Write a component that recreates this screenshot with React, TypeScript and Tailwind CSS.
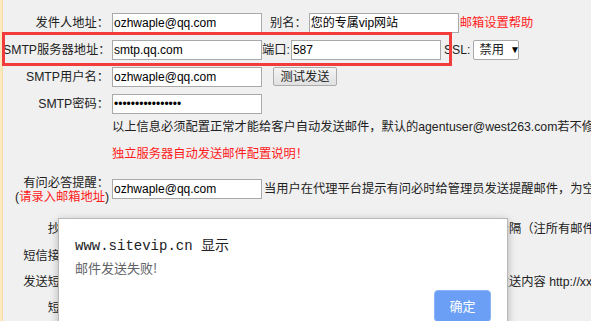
const font = { fontFamily: '"Liberation Sans", "Noto Sans CJK SC", sans-serif' }

function Field({ value, w = 'w-[150px]' }: { value: string; w?: string }) {
  return (
    <div className={`${w} h-[20px] shrink-0 bg-white border border-[#a9a9a9] pl-[1px] flex items-center text-[12px] text-black overflow-hidden`}>
      {value}
    </div>
  )
}

function Label({ children }: { children: React.ReactNode }) {
  return <div className="w-[109px] shrink-0 text-right pr-[3px] text-[#222]">{children}</div>
}

export default function App() {
  return (
    <div className="relative w-[591px] h-[321px] overflow-hidden bg-[#f0f0f0] flex" style={font}>
      {/* left strip */}
      <div className="w-[3px] shrink-0 bg-[#fde9c0] border-r border-[#f5dca8]" />

      <div className="flex-1 flex flex-col pt-[9px] whitespace-nowrap text-[12.25px] leading-[14px] text-[#222]">
        <div className="h-[27px] flex items-center">
          <Label>发件人地址：</Label>
          <Field value="ozhwaple@qq.com" />
          <span className="ml-[8px] mr-[2px]">别名：</span>
          <Field value="您的专属vip网站" />
          <span className="ml-[1px] text-[#ff1a1a]">邮箱设置帮助</span>
        </div>

        <div className="h-[27px] flex items-center">
          <Label>SMTP服务器地址：</Label>
          <Field value="smtp.qq.com" />
          <span className="mr-[1px]">端口:</span>
          <Field value="587" />
          <span className="ml-[3px] mr-[3px]">SSL:</span>
          <div className="h-[20px] w-[46px] bg-white border border-[#a9a9a9] rounded-[2px] flex items-center pl-[5px] gap-[6px]">
            <span>禁用</span>
            <span className="text-[10px] text-black">▼</span>
          </div>
        </div>

        <div className="h-[27px] flex items-center">
          <Label>SMTP用户名：</Label>
          <Field value="ozhwaple@qq.com" />
          <div className="ml-[11px] h-[19px] w-[64px] flex items-center justify-center bg-gradient-to-b from-[#f4f4f4] to-[#e0e0e0] border border-[#acacac] rounded-[2px]">
            测试发送
          </div>
        </div>

        <div className="h-[27px] flex items-center">
          <Label>SMTP密码：</Label>
          <Field value={'•'.repeat(16)} />
        </div>

        <div className="h-[20px] flex items-center">
          <div className="w-[109px] shrink-0" />
          <span>以上信息必须配置正常才能给客户自动发送邮件，默认的agentuser@west263.com若不修改将无法正常发送</span>
        </div>

        <div className="h-[34px] flex items-center">
          <div className="w-[109px] shrink-0" />
          <span className="text-[#ff1a1a]">独立服务器自动发送邮件配置说明！</span>
        </div>

        <div className="h-[43px] flex items-start">
          <div className="w-[109px] shrink-0 text-right pr-[3px] pt-[5px] flex flex-col">
            <span>有问必答提醒：</span>
            <span>
              (<span className="text-[#ff1a1a]">请录入邮箱地址</span>)
            </span>
          </div>
          <div className="mt-[8px] flex items-center">
            <Field value="ozhwaple@qq.com" />
            <span className="ml-[2px]">当用户在代理平台提示有问必时给管理员发送提醒邮件，为空不发送</span>
          </div>
        </div>

        <div className="h-[29px] flex items-center">
          <Label>抄送地址：</Label>
          <Field value="" />
          <span className="ml-[2px]">可填写多个邮箱地址，多个邮箱之间用逗号分隔（注所有邮件</span>
        </div>

        <div className="h-[26px] flex items-center">
          <Label>短信接口账号：</Label>
          <Field value="" />
        </div>

        <div className="h-[26px] flex items-center">
          <Label>发送短信接口：</Label>
          <Field value="" />
          <span className="ml-[2px]">填写短信接口完整地址，系统自动替换号码发送内容 http://xx.com</span>
        </div>

        <div className="h-[26px] flex items-center">
          <Label>短信密码：</Label>
          <Field value="" />
        </div>
      </div>

      {/* annotation box */}
      <div className="absolute left-[2px] top-[32px] w-[450px] h-[34px] border-[3px] border-[#f23c3c]" />

      {/* alert dialog */}
      <div className="absolute left-[58px] top-[218px] w-[450px] h-[130px] bg-white border border-[#b8b8b8] shadow-[0_2px_8px_rgba(0,0,0,0.25)] flex flex-col pl-[16px] pr-[16px] pt-[17px]">
        <div className="text-[14px] leading-[20px] text-[#202124]" style={{ fontFamily: '"Liberation Mono", "Noto Sans CJK SC", monospace' }}>
          www.sitevip.cn 显示
        </div>
        <div className="mt-[4px] text-[13px] leading-[16px] text-[#5f6368]" style={{ fontFamily: '"Noto Sans CJK SC", "Liberation Sans", sans-serif' }}>
          邮件发送失败!
        </div>
        <div className="flex justify-end mt-[14px]">
          <div className="w-[57px] h-[32px] rounded-[4px] bg-[#6a9ff5] border border-[#8ab4f8] text-white text-[13px] flex items-center justify-center" style={{ fontFamily: '"Noto Sans CJK SC", sans-serif' }}>
            确定
          </div>
        </div>
      </div>
    </div>
  )
}
